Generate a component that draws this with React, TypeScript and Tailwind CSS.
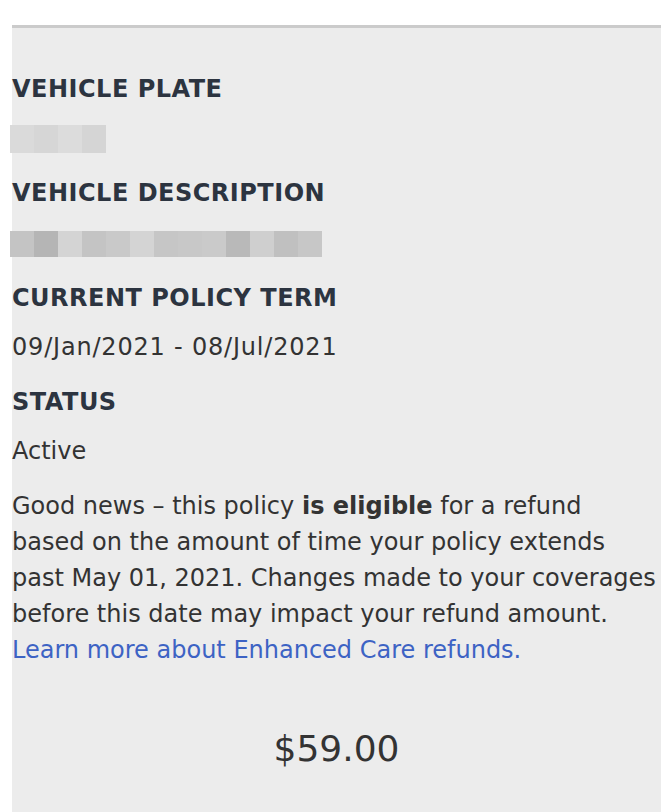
const PLATE_CELLS = ["#dadada", "#d6d6d6", "#dcdcdc", "#d5d5d5"];
const DESC_CELLS = [
  "#c4c4c4",
  "#b5b5b5",
  "#d4d4d4",
  "#c4c4c4",
  "#c9c9c9",
  "#d4d4d4",
  "#c6c6c6",
  "#c8c8c8",
  "#cacaca",
  "#b9b9b9",
  "#cfcfcf",
  "#c0c0c0",
  "#c7c7c7",
];

function Redacted({ cells, height }: { cells: string[]; height: string }) {
  return (
    <div className={`flex -ml-[2px] ${height}`}>
      {cells.map((c, i) => (
        <div key={i} className="w-[24px] h-full" style={{ backgroundColor: c }} />
      ))}
    </div>
  );
}

function Label({ children }: { children: React.ReactNode }) {
  return (
    <h3 className="text-[24px] leading-[36px] font-bold tracking-[0.5px] text-[#2c3440]">
      {children}
    </h3>
  );
}

export default function App() {
  return (
    <div className="min-h-[812px] bg-white pt-[25px] font-['DejaVu_Sans',sans-serif]">
      <div className="ml-[12px] mr-[2px] min-h-[787px] bg-[#ececec] border-t-[3px] border-[#cbcbcb] pt-[43px] text-[#333]">
        <Label>VEHICLE PLATE</Label>
        <div className="mt-[18px] mb-[22px]">
          <Redacted cells={PLATE_CELLS} height="h-[28px]" />
        </div>

        <Label>VEHICLE DESCRIPTION</Label>
        <div className="mt-[20px] mb-[23px]">
          <Redacted cells={DESC_CELLS} height="h-[26px]" />
        </div>

        <Label>CURRENT POLICY TERM</Label>
        <p className="mt-[13px] text-[24px] leading-[36px] tracking-[0.8px]">09/Jan/2021 - 08/Jul/2021</p>

        <div className="mt-[19px]">
          <Label>STATUS</Label>
        </div>
        <p className="mt-[13px] text-[24px] leading-[36px]">Active</p>

        <p className="mt-[19px] text-[24px] leading-[36px] pr-[2px]">
          Good news – this policy <b className="font-bold">is eligible</b> for a refund based on the
          amount of time your policy extends past May 01, 2021. Changes made to your coverages before
          this date may impact your refund amount.{" "}
          <a href="#" className="text-[#3d63c4]">
            Learn more about Enhanced Care refunds.
          </a>
        </p>

        <div className="mt-[54px] text-center text-[36px] leading-[54px] text-[#333]">$59.00</div>
      </div>
    </div>
  );
}
